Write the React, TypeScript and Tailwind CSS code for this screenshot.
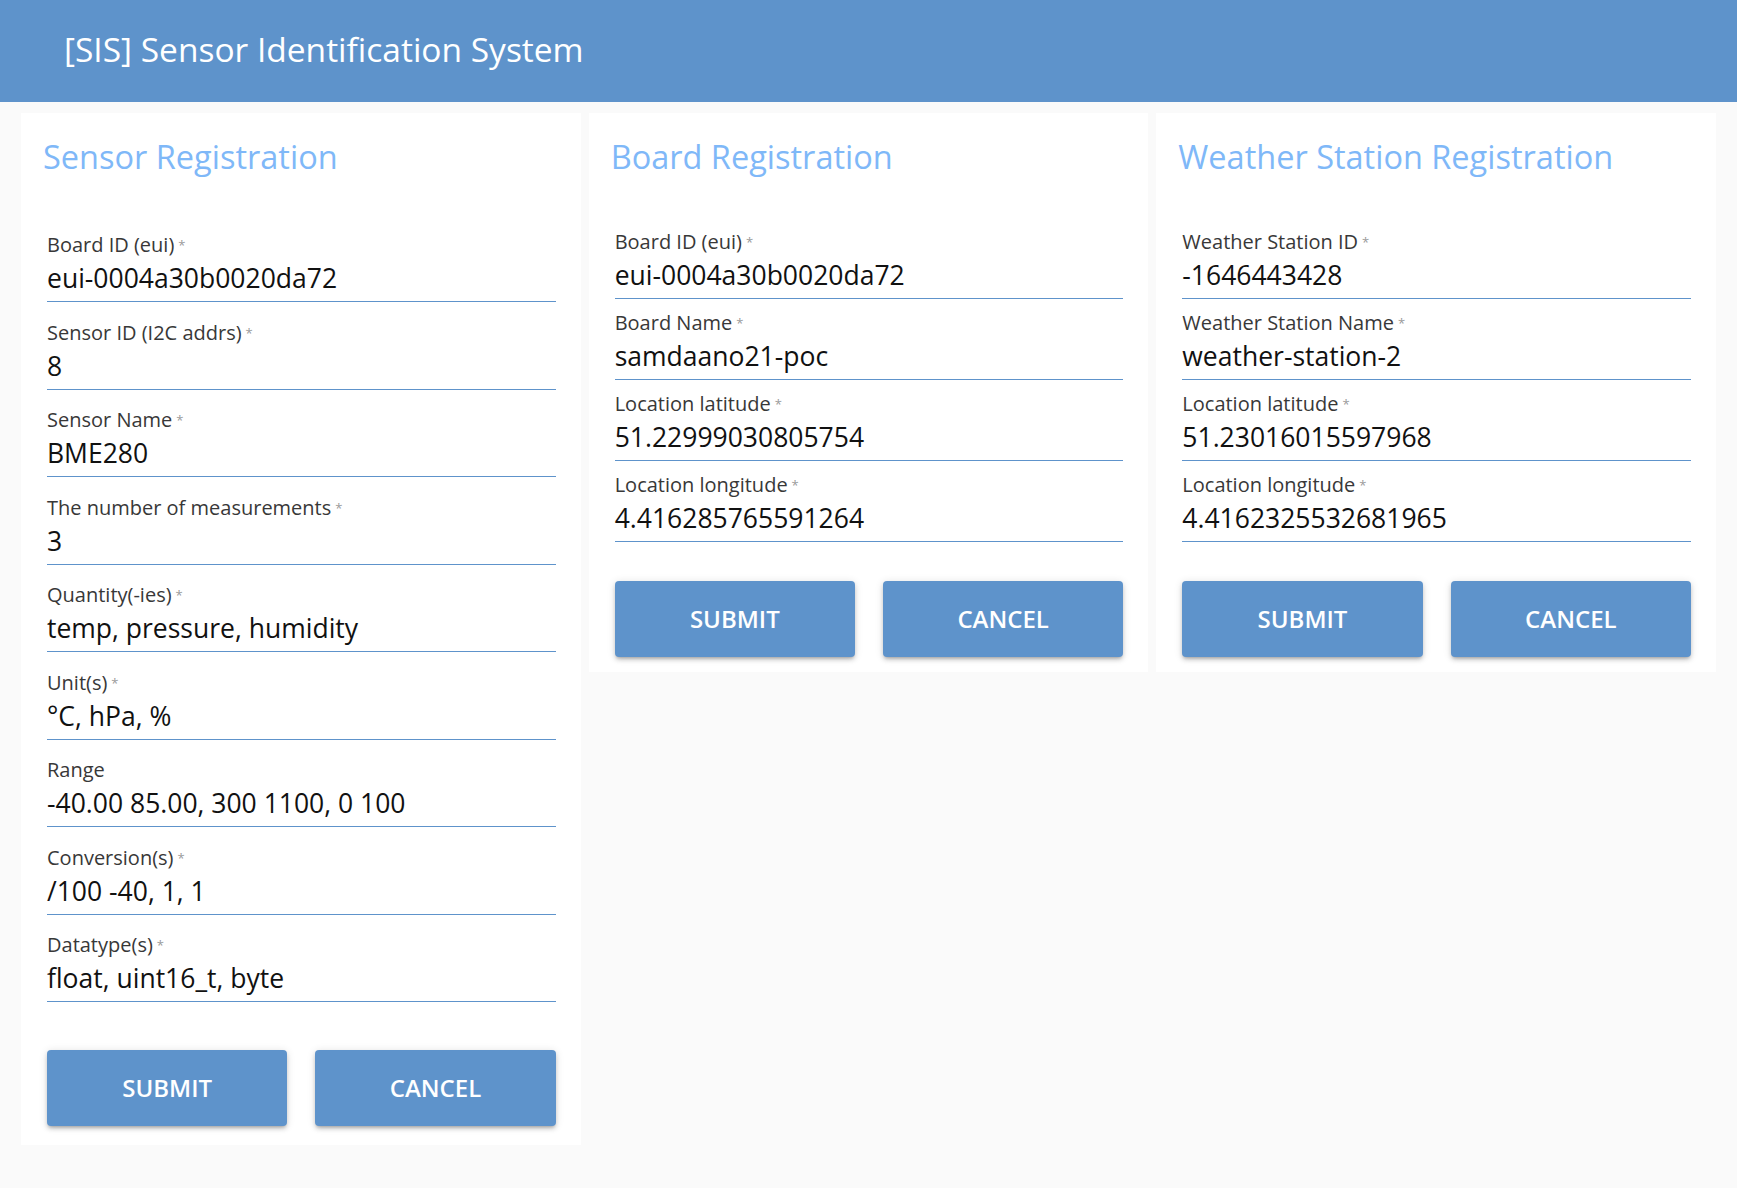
import React from 'react';

type Field = { label: string; value: string; required?: boolean };

const sensorFields: Field[] = [
  { label: 'Board ID (eui)', value: 'eui-0004a30b0020da72', required: true },
  { label: 'Sensor ID (I2C addrs)', value: '8', required: true },
  { label: 'Sensor Name', value: 'BME280', required: true },
  { label: 'The number of measurements', value: '3', required: true },
  { label: 'Quantity(-ies)', value: 'temp, pressure, humidity', required: true },
  { label: 'Unit(s)', value: '°C, hPa, %', required: true },
  { label: 'Range', value: '-40.00 85.00, 300 1100, 0 100' },
  { label: 'Conversion(s)', value: '/100 -40, 1, 1', required: true },
  { label: 'Datatype(s)', value: 'float, uint16_t, byte', required: true },
];

const boardFields: Field[] = [
  { label: 'Board ID (eui)', value: 'eui-0004a30b0020da72', required: true },
  { label: 'Board Name', value: 'samdaano21-poc', required: true },
  { label: 'Location latitude', value: '51.22999030805754', required: true },
  { label: 'Location longitude', value: '4.416285765591264', required: true },
];

const stationFields: Field[] = [
  { label: 'Weather Station ID', value: '-1646443428', required: true },
  { label: 'Weather Station Name', value: 'weather-station-2', required: true },
  { label: 'Location latitude', value: '51.23016015597968', required: true },
  { label: 'Location longitude', value: '4.4162325532681965', required: true },
];

function TextField({ field, wide }: { field: Field; wide: boolean }) {
  return (
    <div className={wide ? 'pt-[18.5px]' : 'pt-[12px]'}>
      <div className="h-[24px] leading-[24px] text-[20px] text-[#383838] whitespace-nowrap">
        {field.label}
        {field.required && <span className="ml-[4px] text-[13px] align-top text-[#9a9a9a]">*</span>}
      </div>
      <div className="h-[44px] leading-[42px] text-[26.5px] text-[#111] whitespace-nowrap">{field.value}</div>
      <div className="h-px bg-[#5e93cb]" />
    </div>
  );
}

function Buttons() {
  return (
    <div className="grid grid-cols-2 gap-[28px]">
      <button className="h-[76px] rounded-[4px] bg-[#5e93cb] text-white text-[24px] font-semibold uppercase shadow-[0_3px_3px_-2px_rgba(0,0,0,0.2),0_3px_4px_0_rgba(0,0,0,0.14),0_1px_8px_0_rgba(0,0,0,0.12)]">
        Submit
      </button>
      <button className="h-[76px] rounded-[4px] bg-[#5e93cb] text-white text-[24px] font-semibold uppercase shadow-[0_3px_3px_-2px_rgba(0,0,0,0.2),0_3px_4px_0_rgba(0,0,0,0.14),0_1px_8px_0_rgba(0,0,0,0.12)]">
        Cancel
      </button>
    </div>
  );
}

function Card({ title, fields, wide }: { title: string; fields: Field[]; wide: boolean }) {
  return (
    <div className={`bg-white pl-[26px] pr-[25px] pt-[24px] ${wide ? 'pb-[19px]' : 'pb-[15px]'}`}>
      <h2 className={`-ml-[4px] h-[40px] leading-[40px] text-[32.5px] text-[#7fb8f8] whitespace-nowrap ${wide ? 'mb-[37.5px]' : 'mb-[41px]'}`}>
        {title}
      </h2>
      {fields.map((f) => (
        <TextField key={f.label} field={f} wide={wide} />
      ))}
      <div className={wide ? 'mt-[48px]' : 'mt-[39px]'}>
        <Buttons />
      </div>
    </div>
  );
}

export default function App() {
  return (
    <div className="min-h-[1188px] bg-[#fafafa]" style={{ fontFamily: '"Open Sans", "Noto Sans", sans-serif' }}>
      <header className="h-[102px] bg-[#5e93cb] flex items-center pl-[64px] pb-[4px]">
        <h1 className="text-[33.5px] text-white whitespace-nowrap">[SIS] Sensor Identification System</h1>
      </header>
      <main className="grid grid-cols-3 gap-[8px] px-[21px] pt-[11px] items-start">
        <Card title="Sensor Registration" fields={sensorFields} wide />
        <Card title="Board Registration" fields={boardFields} wide={false} />
        <Card title="Weather Station Registration" fields={stationFields} wide={false} />
      </main>
    </div>
  );
}
